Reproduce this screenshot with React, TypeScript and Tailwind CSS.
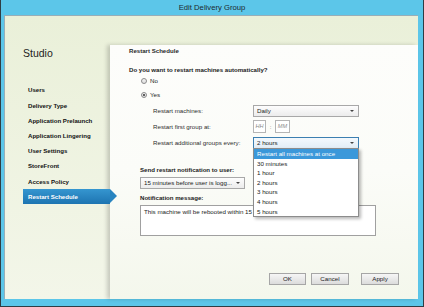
import React from "react";

function Arrow() {
  return (
    <span className="absolute right-[4px] top-1/2 -translate-y-1/2 w-0 h-0 border-x-[2px] border-x-transparent border-t-[2.5px] border-t-[#444]" />
  );
}

function Radio({ checked }: { checked?: boolean }) {
  return (
    <span className="w-[6px] h-[6px] rounded-full border border-[#8b8b8b] bg-gradient-to-b from-[#f4f4f4] to-[#dedede] flex items-center justify-center">
      {checked ? <span className="w-[2.5px] h-[2.5px] rounded-full bg-[#333]" /> : null}
    </span>
  );
}

export default function App() {
  const nav = [
    "Users",
    "Delivery Type",
    "Application Prelaunch",
    "Application Lingering",
    "User Settings",
    "StoreFront",
    "Access Policy",
    "Restart Schedule",
  ];
  const opts = [
    "Restart all machines at once",
    "30 minutes",
    "1 hour",
    "2 hours",
    "3 hours",
    "4 hours",
    "5 hours",
  ];
  return (
    <div className="w-[424px] h-[307px] bg-[#5cc6e9] border-x border-b border-[#2f3d44] flex flex-col font-['Liberation_Sans',Arial,sans-serif] text-[#222] overflow-hidden">
      <div className="h-[15px] shrink-0 flex items-center justify-center text-[7.7px] leading-none text-[#1d2a30] pt-[1px]">
        Edit Delivery Group
      </div>
      <div className="h-[284px] shrink-0 ml-[3px] mr-[5px] border-t border-l border-[#97aeb8] bg-gradient-to-b from-[#eaf0d9] to-[#f3f6e9] flex">
        <div className="w-[105px] shrink-0 relative z-10">
          <div className="mt-[31px] pl-[18px] text-[10.5px] leading-[12px] text-[#222]">Studio</div>
          <div className="mt-[23.4px]">
            {nav.map((n, i) =>
              i === nav.length - 1 ? (
                <div
                  key={n}
                  className="relative h-[15.2px] ml-[18px] w-[87px] flex items-center pl-[5px] text-[6.1px] font-bold text-white bg-gradient-to-b from-[#3596d0] to-[#1d74b1]"
                >
                  {n}
                  <span className="absolute left-full top-0 w-0 h-0 border-y-[7.6px] border-y-transparent border-l-[7px] border-l-[#2884c0]" />
                </div>
              ) : (
                <div
                  key={n}
                  className="h-[15.2px] ml-[18px] w-[87px] flex items-center pl-[5px] text-[6.1px] font-bold text-[#111]"
                >
                  {n}
                </div>
              )
            )}
          </div>
        </div>
        <div className="flex-1 mt-[29px] bg-gradient-to-b from-[#fdfdfb] via-[#fbfcf8] to-[#f4f7ec] shadow-[-3px_0_4px_rgba(0,0,0,0.18)] pl-[19px] flex flex-col">
          <div className="mt-[2px] h-[8px] leading-[8px] text-[6.1px] font-bold text-[#2a2a2a]">Restart Schedule</div>
          <div className="mt-[11px] h-[8px] leading-[8px] text-[6.1px] font-bold text-[#1a1a1a]">
            Do you want to restart machines automatically?
          </div>
          <div className="mt-[3px] h-[8px] ml-[12px] flex items-center gap-[3px] text-[6.2px]">
            <Radio />
            <span>No</span>
          </div>
          <div className="mt-[6px] h-[8px] ml-[12px] flex items-center gap-[3px] text-[6.2px]">
            <Radio checked />
            <span>Yes</span>
          </div>
          <div className="mt-[6px] h-[12px] ml-[24px] flex items-center text-[6.2px] text-[#2e2e2e]">
            <span className="w-[100px]">Restart machines:</span>
            <div className="relative w-[106px] h-[12px] border border-[#a8a8a8] bg-gradient-to-b from-[#fdfdfd] to-[#ececec] flex items-center pl-[3px] text-[#222]">
              Daily
              <Arrow />
            </div>
          </div>
          <div className="mt-[3px] h-[13px] ml-[24px] flex items-center text-[6.2px] text-[#2e2e2e]">
            <span className="w-[100px]">Restart first group at:</span>
            <div className="w-[13px] h-[13px] border border-[#b5b5b5] bg-white flex items-center justify-center italic text-[5.6px] text-[#8a8a8a]">
              HH
            </div>
            <span className="w-[9px] text-center text-[#666]">:</span>
            <div className="w-[15px] h-[13px] border border-[#b5b5b5] bg-white flex items-center justify-center italic text-[5.6px] text-[#8a8a8a]">
              MM
            </div>
          </div>
          <div className="mt-[4px] h-[12px] ml-[24px] flex items-center text-[6.2px] text-[#2e2e2e]">
            <span className="w-[100px] whitespace-nowrap">Restart additional groups every:</span>
            <div className="relative w-[106px] h-[12px] border border-[#3c7fb1] bg-gradient-to-b from-[#f4f9fd] to-[#e2edf6] flex items-center pl-[3px] text-[#222]">
              2 hours
              <Arrow />
              <div className="absolute left-[-1px] top-full w-[106px] border border-[#8c8c8c] bg-white shadow-[2px_2px_3px_rgba(0,0,0,0.28)] z-30">
                {opts.map((o, i) => (
                  <div
                    key={o}
                    className={
                      i === 0
                        ? "h-[9.6px] leading-[9.6px] pl-[3px] bg-[#3b98da] text-white"
                        : "h-[9.6px] leading-[9.6px] pl-[3px] text-[#222]"
                    }
                  >
                    {o}
                  </div>
                ))}
              </div>
            </div>
          </div>
          <div className="mt-[17px] h-[8px] leading-[8px] ml-[11px] text-[6.1px] font-bold text-[#1a1a1a]">
            Send restart notification to user:
          </div>
          <div className="mt-[3px] ml-[11px] relative w-[105px] h-[12px] border border-[#a8a8a8] bg-gradient-to-b from-[#fdfdfd] to-[#ececec] flex items-center pl-[3px] text-[6.2px] text-[#222] whitespace-nowrap">
            15 minutes before user is logg...
            <Arrow />
          </div>
          <div className="mt-[5px] h-[8px] leading-[8px] ml-[11px] text-[6.1px] font-bold text-[#1a1a1a]">
            Notification message:
          </div>
          <div className="mt-[3px] ml-[11px] w-[236px] h-[31px] border border-[#a0a0a0] bg-white pl-[3px] pt-[2px] text-[6.2px] leading-[8px] text-[#222]">
            <span className="whitespace-nowrap">This machine will be rebooted within 15</span>
          </div>
          <div className="mt-[37px] ml-[140px] h-[12px] flex text-[6.2px] text-[#222]">
            <div className="w-[37px] h-[12px] border border-[#a6a6a6] bg-gradient-to-b from-[#f6f6f6] to-[#dcdcdc] flex items-center justify-center">
              OK
            </div>
            <div className="ml-[5px] w-[38px] h-[12px] border border-[#a6a6a6] bg-gradient-to-b from-[#f6f6f6] to-[#dcdcdc] flex items-center justify-center">
              Cancel
            </div>
            <div className="ml-[12px] w-[38px] h-[12px] border border-[#a6a6a6] bg-gradient-to-b from-[#f6f6f6] to-[#dcdcdc] flex items-center justify-center">
              Apply
            </div>
          </div>
        </div>
      </div>
    </div>
  );
}
